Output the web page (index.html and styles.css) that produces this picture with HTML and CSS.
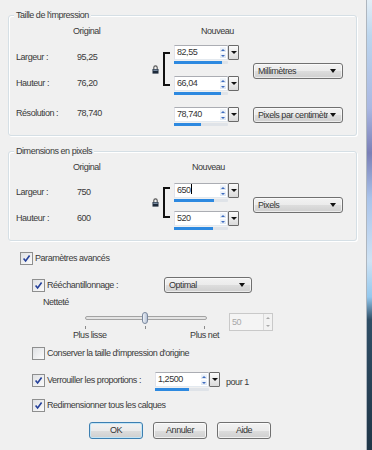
FILE: index.html
```html
<!DOCTYPE html>
<html lang="fr">
<head>
    <meta charset="UTF-8">
    <title>Redimensionner</title>
    <link rel="stylesheet" href="styles.css">
</head>
<body>
<div class="window">
    <div class="dialog">

        <!-- Taille de l'impression -->
        <div class="group group-print">
            <div class="group-title">Taille de l'impression</div>
            <div class="group-body">
                <div class="labels">
                    <div class="head">Original</div>
                    <div class="line line-w"><span class="lbl">Largeur :</span><span>95,25</span></div>
                    <div class="line line-h"><span class="lbl">Hauteur :</span><span>76,20</span></div>
                    <div class="line line-r"><span class="lbl">Résolution :</span><span>78,740</span></div>
                </div>
                <div class="link">
                    <svg class="lock" viewBox="0 0 7 9"><path d="M1.8 4V2.6a1.7 1.7 0 0 1 3.4 0V4" fill="none" stroke="#555" stroke-width="1.1"/><rect x="0.5" y="4" width="6" height="4.6" fill="#1d2a3a"/><rect x="1.3" y="4.6" width="4.4" height="1.2" fill="#8fa3bb"/></svg>
                    <div class="bracket"></div>
                </div>
                <div class="fields">
                    <div class="head">Nouveau</div>
                    <div class="spin">
                        <div class="spin-main">
                            <div class="spin-box"><span class="spin-text">82,55</span><span class="arrows"><i class="up"></i><i class="down"></i></span></div>
                            <div class="bar"><span style="width:89%"></span></div>
                        </div>
                        <span class="drop"></span>
                    </div>
                    <div class="spin">
                        <div class="spin-main">
                            <div class="spin-box"><span class="spin-text">66,04</span><span class="arrows"><i class="up"></i><i class="down"></i></span></div>
                            <div class="bar"><span style="width:87%"></span></div>
                        </div>
                        <span class="drop"></span>
                    </div>
                    <div class="spin">
                        <div class="spin-main">
                            <div class="spin-box"><span class="spin-text">78,740</span><span class="arrows"><i class="up"></i><i class="down"></i></span></div>
                            <div class="bar"><span style="width:50%"></span></div>
                        </div>
                        <span class="drop"></span>
                    </div>
                </div>
                <div class="units">
                    <div class="combo"><span class="combo-text">Millimètres</span></div>
                    <div class="combo"><span class="combo-text">Pixels par centimètre</span></div>
                </div>
            </div>
        </div>

        <!-- Dimensions en pixels -->
        <div class="group group-px">
            <div class="group-title">Dimensions en pixels</div>
            <div class="group-body">
                <div class="labels">
                    <div class="head">Original</div>
                    <div class="line line-w"><span class="lbl">Largeur :</span><span>750</span></div>
                    <div class="line line-h"><span class="lbl">Hauteur :</span><span>600</span></div>
                </div>
                <div class="link">
                    <svg class="lock" viewBox="0 0 7 9"><path d="M1.8 4V2.6a1.7 1.7 0 0 1 3.4 0V4" fill="none" stroke="#555" stroke-width="1.1"/><rect x="0.5" y="4" width="6" height="4.6" fill="#1d2a3a"/><rect x="1.3" y="4.6" width="4.4" height="1.2" fill="#8fa3bb"/></svg>
                    <div class="bracket"></div>
                </div>
                <div class="fields">
                    <div class="head">Nouveau</div>
                    <div class="spin">
                        <div class="spin-main">
                            <div class="spin-box"><span class="spin-text">650<b class="caret"></b></span><span class="arrows"><i class="up"></i><i class="down"></i></span></div>
                            <div class="bar"><span style="width:74%"></span></div>
                        </div>
                        <span class="drop"></span>
                    </div>
                    <div class="spin">
                        <div class="spin-main">
                            <div class="spin-box"><span class="spin-text">520</span><span class="arrows"><i class="up"></i><i class="down"></i></span></div>
                            <div class="bar"><span style="width:72%"></span></div>
                        </div>
                        <span class="drop"></span>
                    </div>
                </div>
                <div class="units">
                    <div class="combo"><span class="combo-text">Pixels</span></div>
                </div>
            </div>
        </div>

        <!-- Options -->
        <div class="options">
            <div class="check-row row-advanced">
                <span class="cb"><svg viewBox="0 0 9 9"><path d="M1.6 4.6 3.6 7 7.6 1.6" fill="none" stroke="#24409a" stroke-width="1.6"/></svg></span>
                <span class="cb-label">Paramètres avancés</span>
            </div>
            <div class="check-row row-resample">
                <span class="cb"><svg viewBox="0 0 9 9"><path d="M1.6 4.6 3.6 7 7.6 1.6" fill="none" stroke="#24409a" stroke-width="1.6"/></svg></span>
                <span class="cb-label wide">Rééchantillonnage :</span>
                <div class="combo combo-method"><span class="combo-text">Optimal</span></div>
            </div>
            <div class="sharp-title">Netteté</div>
            <div class="sharp-row">
                <div class="slider">
                    <div class="track-area">
                        <div class="track"></div>
                        <span class="thumb"></span>
                    </div>
                    <div class="ticks"><i></i><i></i><i></i></div>
                    <div class="slider-labels"><span>Plus lisse</span><span>Plus net</span></div>
                </div>
                <div class="spin-off">
                    <span class="spin-text">50</span>
                    <span class="arrows-off"><i class="up"></i><i class="down"></i></span>
                </div>
            </div>
            <div class="check-row row-keep">
                <span class="cb"></span>
                <span class="cb-label">Conserver la taille d'impression d'origine</span>
            </div>
            <div class="check-row row-ratio">
                <span class="cb"><svg viewBox="0 0 9 9"><path d="M1.6 4.6 3.6 7 7.6 1.6" fill="none" stroke="#24409a" stroke-width="1.6"/></svg></span>
                <span class="cb-label wide-ratio">Verrouiller les proportions :</span>
                <div class="spin">
                    <div class="spin-main">
                        <div class="spin-box"><span class="spin-text">1,2500</span><span class="arrows"><i class="up"></i><i class="down"></i></span></div>
                        <div class="bar"><span style="width:63%"></span></div>
                    </div>
                    <span class="drop"></span>
                </div>
                <span class="per">pour 1</span>
            </div>
            <div class="check-row row-layers">
                <span class="cb"><svg viewBox="0 0 9 9"><path d="M1.6 4.6 3.6 7 7.6 1.6" fill="none" stroke="#24409a" stroke-width="1.6"/></svg></span>
                <span class="cb-label">Redimensionner tous les calques</span>
            </div>
            <div class="buttons">
                <button class="btn btn-default">OK</button>
                <button class="btn">Annuler</button>
                <button class="btn">Aide</button>
            </div>
        </div>
    </div>
    <div class="frame"></div>
</div>
</body>
</html>
```

FILE: styles.css
```css
* { margin: 0; padding: 0; box-sizing: border-box; }
body {
    font-family: "Liberation Sans", Arial, sans-serif;
    font-size: 9px;
    letter-spacing: -0.45px;
    color: #3a3a3a;
    background: #f0f0f0;
}
.window {
    display: flex;
    width: 372px;
    height: 450px;
    overflow: hidden;
}
.dialog {
    width: 366px;
    padding: 15px 0 0 8px;
}
.frame {
    width: 6px;
    border-left: 1px solid #aeb6bf;
    background: linear-gradient(to bottom, #e3eef6 0, #bcd6ee 8%, #aab8e2 24%, #7a7fb6 34%, #a9c3ea 44%, #cfe3f4 58%, #93c8ee 66%, #2f4e66 71%, #203648 100%);
}

/* group boxes */
.group {
    width: 349px;
    border: 1px solid #d5dfe5;
    border-radius: 3px;
    box-shadow: inset 1px 1px 0 #fff, 1px 1px 0 #fff;
}
.group-print { height: 121px; }
.group-px { height: 90px; margin-top: 15px; }
.group-title {
    width: fit-content;
    margin: -6px 0 0 5px;
    padding: 0 2px;
    line-height: 11px;
    background: #f0f0f0;
}
.group-body {
    display: flex;
    padding-left: 7px;
}
.head {
    height: 20px;
    line-height: 20px;
}
.labels { width: 136px; }
.labels .head { padding-left: 57px; }
.line {
    display: flex;
    line-height: 11px;
}
.lbl { width: 61px; }
.line-w { margin-top: 11px; }
.line-h { margin-top: 15px; }
.line-r { margin-top: 19px; }
.group-px .line-w { margin-top: 10px; }

/* lock + bracket */
.link {
    width: 22px;
    display: flex;
    align-items: center;
    align-self: flex-start;
    margin-top: 31px;
}
.group-px .link { margin-top: 30px; }
.lock {
    width: 7px;
    height: 9px;
    margin-right: 4px;
}
.bracket {
    width: 7px;
    height: 34px;
    border: 2px solid #111;
    border-right: 0;
}
.group-px .bracket { height: 31px; }

/* spin fields */
.fields { width: 79px; }
.group-print .fields .head { padding-left: 27px; }
.group-px .fields .head { padding-left: 18px; }
.fields .head + .spin { margin-top: 4px; }
.fields .spin + .spin { margin-top: 12px; }
.group-px .fields .head + .spin { margin-top: 6px; }
.group-px .fields .spin + .spin { margin-top: 9px; }
.spin {
    display: flex;
    width: 65px;
}
.spin-main { width: 54px; }
.spin-box {
    display: flex;
    height: 15px;
    border: 1px solid #abadb3;
    border-color: #abadb3 #dbdfe6 #e3e9ef #e2e3ea;
    background: #fff;
}
.spin-text {
    flex: 1;
    padding-left: 2px;
    line-height: 13px;
    color: #333;
}
.caret {
    display: inline-block;
    width: 1px;
    height: 10px;
    background: #000;
    vertical-align: -1px;
}
.arrows {
    width: 6px;
    margin: 1px 1px 1px 0;
    display: flex;
    flex-direction: column;
    gap: 1px;
}
.arrows i, .arrows-off i {
    flex: 1;
    display: flex;
    align-items: center;
    justify-content: center;
    background: linear-gradient(#f3f7fc, #dce6f2);
}
.arrows i::before, .arrows-off i::before {
    content: "";
    border-left: 2px solid transparent;
    border-right: 2px solid transparent;
}
.arrows .up::before { border-bottom: 2px solid #3f6cc0; }
.arrows .down::before { border-top: 2px solid #3f6cc0; }
.drop {
    width: 11px;
    height: 15px;
    border: 1px solid #6a6a6a;
    border-radius: 1px;
    background: linear-gradient(#fbfbfb, #dadada);
    display: flex;
    align-items: center;
    justify-content: center;
}
.drop::before {
    content: "";
    border-left: 3px solid transparent;
    border-right: 3px solid transparent;
    border-top: 3px solid #111;
}
.bar {
    height: 3px;
    margin-top: 1px;
    background: #dfe3e8;
    border-radius: 1px;
}
.bar span {
    display: block;
    height: 100%;
    background: #2d89e0;
}

/* combos */
.units { width: 90px; }
.combo {
    width: 90px;
    height: 16px;
    border: 1px solid #707070;
    border-radius: 3px;
    background: linear-gradient(#f2f2f2 0, #ebebeb 50%, #dddddd 51%, #cfcfcf 100%);
    box-shadow: inset 0 0 0 1px rgba(255,255,255,0.6);
    display: flex;
    align-items: center;
    padding: 0 6px 0 4px;
    color: #333;
}
.combo-text {
    flex: 1;
    overflow: hidden;
    white-space: nowrap;
}
.combo::after {
    content: "";
    margin-left: 2px;
    border-left: 3px solid transparent;
    border-right: 3px solid transparent;
    border-top: 4px solid #111;
}
.group-print .combo:first-child { margin-top: 42px; }
.group-print .combo + .combo { margin-top: 28px; }
.group-px .combo { margin-top: 40px; }

/* options */
.check-row {
    display: flex;
    align-items: center;
    line-height: 13px;
    padding-left: 24px;
}
.cb {
    width: 13px;
    height: 13px;
    border: 1px solid #8e8f8f;
    padding: 1px;
    background: linear-gradient(135deg, #dfe1e4, #fbfbfb);
    display: flex;
}
.cb svg { width: 9px; height: 9px; }
.cb-label { margin-left: 2px; }
.row-advanced { padding-left: 12px; margin-top: 11px; }
.row-resample { margin-top: 12px; }
.wide { width: 117px; }
.combo-method { width: 88px; }
.sharp-title {
    padding-left: 35px;
    margin-top: 4px;
    line-height: 11px;
}
.sharp-row {
    display: flex;
    align-items: flex-start;
    padding-left: 65px;
    margin-top: 1px;
}
.slider { width: 146px; }
.track-area {
    position: relative;
    height: 16px;
    margin: 0 12px;
    padding-top: 7px;
}
.track {
    height: 4px;
    border: 1px solid #a3a3a3;
    border-radius: 2px;
    background: #e4e4e4;
}
.thumb {
    position: absolute;
    left: 57px;
    top: 3px;
    width: 6px;
    height: 12px;
    border: 1px solid #7a889e;
    border-radius: 3px;
    background: linear-gradient(90deg, #eef2f8, #b9c4d6);
}
.ticks {
    display: flex;
    justify-content: space-between;
    height: 3px;
    margin: 1px 14px 0 12px;
}
.ticks i {
    width: 1px;
    background: #8a8a8a;
}
.slider-labels {
    display: flex;
    justify-content: space-between;
    margin-top: 1px;
    line-height: 11px;
}
.spin-off {
    display: flex;
    width: 44px;
    height: 18px;
    margin: 4px 0 0 10px;
    border: 1px solid #c9c9c9;
    background: #f4f4f4;
    color: #a8a8a8;
}
.spin-off .spin-text { line-height: 16px; color: #a8a8a8; }
.arrows-off {
    width: 9px;
    display: flex;
    flex-direction: column;
    border-left: 1px solid #dadada;
}
.arrows-off i { background: #f2f2f2; }
.arrows-off .up::before { border-bottom: 2px solid #a9a9a9; }
.arrows-off .down::before { border-top: 2px solid #a9a9a9; }
.row-keep { margin-top: 6px; }
.row-ratio {
    align-items: flex-start;
    margin-top: 12px;
}
.row-ratio .cb { margin-top: 2px; }
.row-ratio .cb-label { margin-top: 2px; }
.wide-ratio { width: 108px; white-space: nowrap; }
.per {
    margin: 4px 0 0 6px;
}
.row-layers { margin-top: 8px; }

/* buttons */
.buttons {
    display: flex;
    gap: 10px;
    padding-left: 81px;
    margin-top: 10px;
}
.btn {
    width: 54px;
    height: 17px;
    border: 1px solid #707070;
    border-radius: 3px;
    background: linear-gradient(#f2f2f2 0, #ebebeb 50%, #dddddd 51%, #cfcfcf 100%);
    box-shadow: inset 0 0 0 1px rgba(255,255,255,0.7);
    font: inherit;
    letter-spacing: inherit;
    color: #333;
    line-height: 15px;
}
.btn-default {
    border-color: #3c7fb1;
    box-shadow: inset 0 0 0 1px #c4e5f6;
}
```
